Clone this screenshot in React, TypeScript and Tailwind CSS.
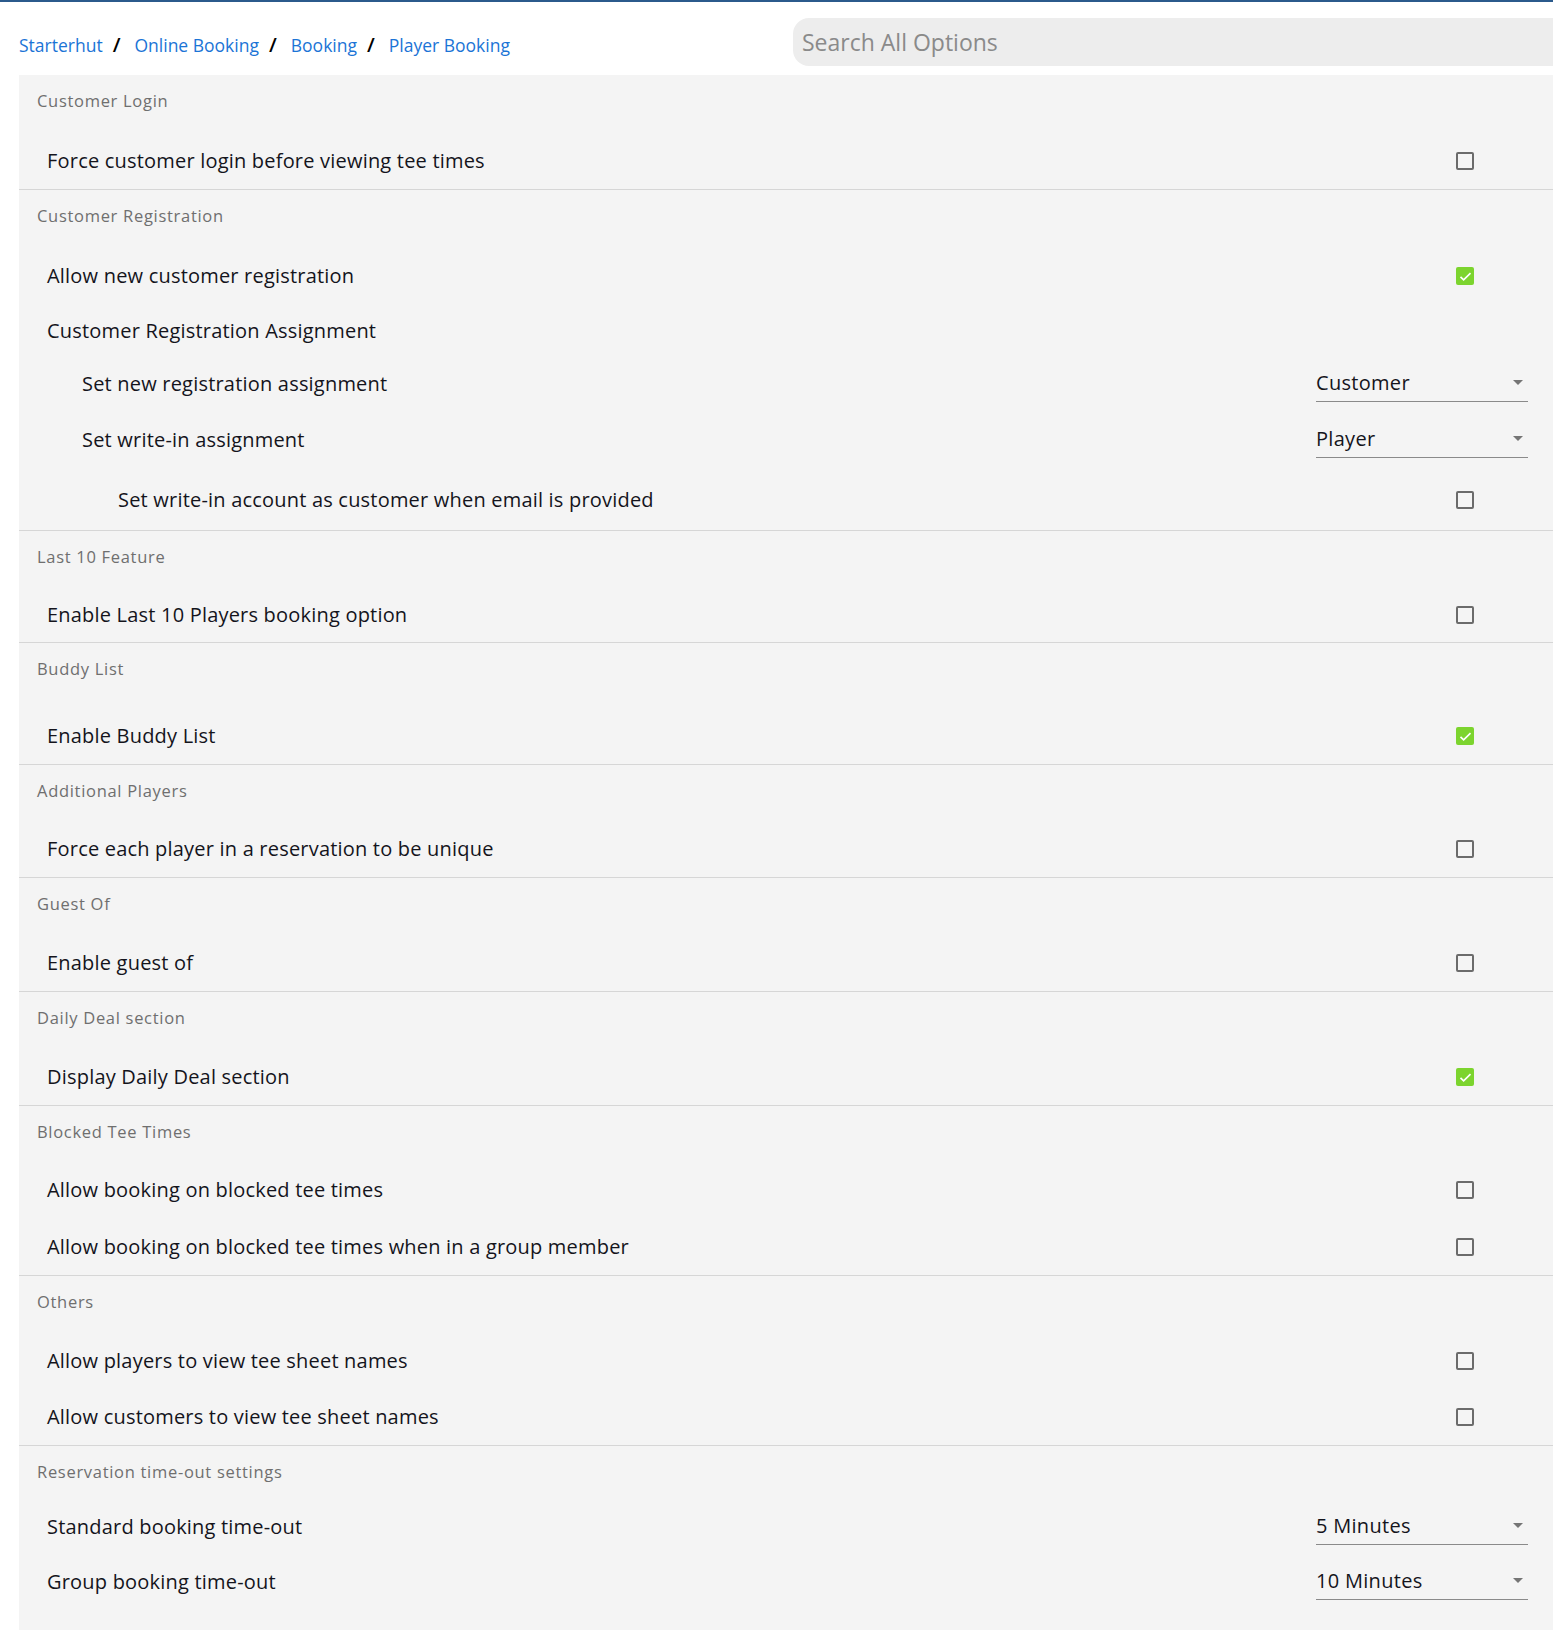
import React from "react"

type Row = {
  label: string
  kind: "check" | "select" | "text"
  checked?: boolean
  value?: string
  level?: number
  h?: string
}

type Section = {
  title: string
  headH?: string
  rows: Row[]
}

const sections: Section[] = [
  {
    title: "Customer Login",
    rows: [{ label: "Force customer login before viewing tee times", kind: "check", h: "h-[57px]" }],
  },
  {
    title: "Customer Registration",
    rows: [
      { label: "Allow new customer registration", kind: "check", checked: true, h: "h-[58px]" },
      { label: "Customer Registration Assignment", kind: "text", h: "h-[52px]" },
      { label: "Set new registration assignment", kind: "select", value: "Customer", level: 1, h: "h-[54px]" },
      { label: "Set write-in assignment", kind: "select", value: "Player", level: 1, h: "h-[58px]" },
      { label: "Set write-in account as customer when email is provided", kind: "check", level: 2, h: "h-[61px]" },
    ],
  },
  {
    title: "Last 10 Feature",
    headH: "h-[56px]",
    rows: [{ label: "Enable Last 10 Players booking option", kind: "check", h: "h-[55px]" }],
  },
  {
    title: "Buddy List",
    headH: "h-[65px]",
    rows: [{ label: "Enable Buddy List", kind: "check", checked: true }],
  },
  {
    title: "Additional Players",
    headH: "h-[56px]",
    rows: [{ label: "Force each player in a reservation to be unique", kind: "check" }],
  },
  {
    title: "Guest Of",
    rows: [{ label: "Enable guest of", kind: "check" }],
  },
  {
    title: "Daily Deal section",
    headH: "h-[57px]",
    rows: [{ label: "Display Daily Deal section", kind: "check", checked: true }],
  },
  {
    title: "Blocked Tee Times",
    headH: "h-[56px]",
    rows: [
      { label: "Allow booking on blocked tee times", kind: "check" },
      { label: "Allow booking on blocked tee times when in a group member", kind: "check", h: "h-[57px]" },
    ],
  },
  {
    title: "Others",
    rows: [
      { label: "Allow players to view tee sheet names", kind: "check" },
      { label: "Allow customers to view tee sheet names", kind: "check" },
    ],
  },
  {
    title: "Reservation time-out settings",
    headH: "h-[56px]",
    rows: [
      { label: "Standard booking time-out", kind: "select", value: "5 Minutes", h: "h-[50px]" },
      { label: "Group booking time-out", kind: "select", value: "10 Minutes", h: "h-[60px]" },
    ],
  },
]

const Checkbox = ({ checked }: { checked?: boolean }) =>
  checked ? (
    <span className="flex h-[18px] w-[18px] items-center justify-center rounded-[2px] bg-[#7cd42e]">
      <svg viewBox="0 0 24 24" className="h-[15px] w-[15px]" fill="none" stroke="white" strokeWidth="2.6">
        <path d="M4 12.5l5 5L20 6.5" />
      </svg>
    </span>
  ) : (
    <span className="block h-[18px] w-[18px] rounded-[2px] border-2 border-[#6b6b6b]" />
  )

const Select = ({ value }: { value: string }) => (
  <div className="mr-[25px] flex h-[36px] w-[212px] items-center justify-between border-b border-[#8a8a8a] pb-[2px]">
    <span className="text-[20px] tracking-[0.3px] text-[#14141c]">{value}</span>
    <svg viewBox="0 0 10 5" className="mr-[5px] h-[5px] w-[10px]">
      <path d="M0 0h10L5 5z" fill="#757575" />
    </svg>
  </div>
)

const indent = ["pl-[28px]", "pl-[63px]", "pl-[99px]"]

const Slash = () => <span className="ml-[10px] mr-[14px] text-[20px] font-semibold text-black">/</span>

export default function App() {
  return (
    <div
      className="min-h-[1631px] border-t-2 border-[#2b5a8c] bg-white"
      style={{ fontFamily: "'Open Sans', 'Liberation Sans', sans-serif" }}
    >
      <div className="flex h-[73px] items-start">
        <nav className="flex items-center pl-[19px] pt-[28px] text-[17.5px] text-[#1b74d6]">
          <span>Starterhut</span>
          <Slash />
          <span>Online Booking</span>
          <Slash />
          <span>Booking</span>
          <Slash />
          <span>Player Booking</span>
        </nav>
        <div className="ml-auto mt-[16px] flex h-[48px] w-[760px] items-center rounded-l-[16px] bg-[#ededed] pl-[9px]">
          <span className="text-[23px] text-[#8a8a8a]">Search All Options</span>
        </div>
      </div>

      <div className="ml-[19px] bg-[#f4f4f4]">
        {sections.map((s, i) => {
          const last = i === sections.length - 1
          return (
            <section
              key={s.title}
              className={last ? "pb-[18px]" : "border-b border-[#d6d6d6]"}
            >
              <div className={`${s.headH ?? "h-[57px]"} pl-[18px] pt-[15px]`}>
                <div className="text-[16.5px] leading-[22px] tracking-[0.7px] text-[#6f6f6f]">{s.title}</div>
              </div>
              {s.rows.map((r) => (
                <div
                  key={r.label}
                  className={`flex ${r.h ?? "h-[56px]"} items-center justify-between ${indent[r.level ?? 0]}`}
                >
                  <span className="text-[20px] tracking-[0.2px] text-[#14141c]">{r.label}</span>
                  {r.kind === "check" && (
                    <span className="mr-[79px]">
                      <Checkbox checked={r.checked} />
                    </span>
                  )}
                  {r.kind === "select" && <Select value={r.value!} />}
                </div>
              ))}
            </section>
          )
        })}
      </div>
    </div>
  )
}
